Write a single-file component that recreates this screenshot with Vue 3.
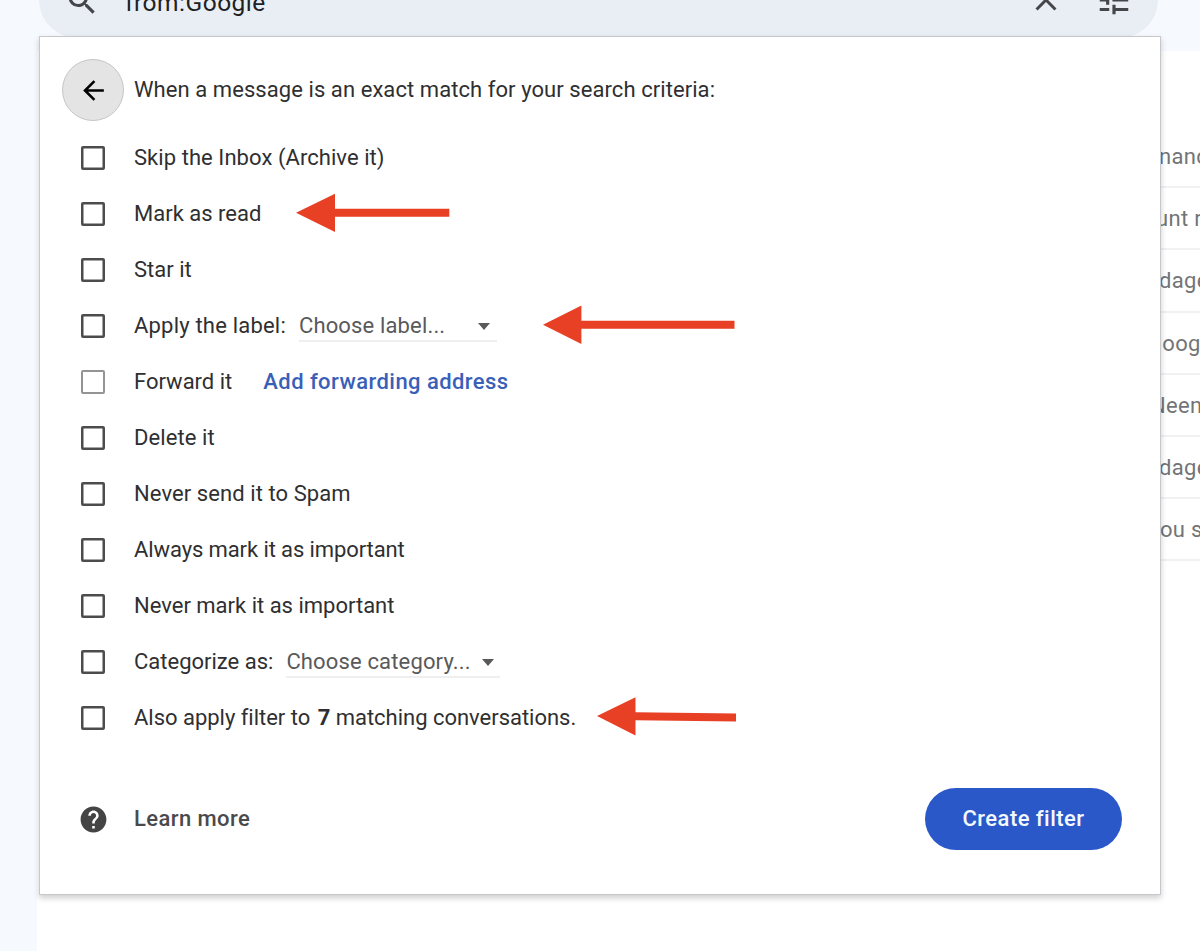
<template>
  <div class="page">
    <header class="search-bar">
      <svg class="icon-search" width="36" height="36" viewBox="0 0 24 24">
        <path d="M15.5 14h-.79l-.28-.27A6.47 6.47 0 0 0 16 9.5 6.5 6.5 0 1 0 9.5 16c1.61 0 3.09-.59 4.23-1.57l.27.28v.79l5 4.99L20.49 19l-4.99-5zm-6 0C7.01 14 5 11.99 5 9.5S7.01 5 9.5 5 14 7.01 14 9.5 11.99 14 9.5 14z" />
      </svg>
      <span class="query">from:Google</span>
      <svg class="icon-close" width="36" height="36" viewBox="0 0 24 24">
        <path d="M19 6.41L17.59 5 12 10.59 6.41 5 5 6.41 10.59 12 5 17.59 6.41 19 12 13.41 17.59 19 19 17.59 13.41 12z" />
      </svg>
      <svg class="icon-tune" width="38" height="38" viewBox="0 0 24 24">
        <path d="M3 17v2h6v-2H3zM3 5v2h10V5H3zm10 16v-2h8v-2h-8v-2h-2v6h2zM7 9v2H3v2h4v2h2V9H7zm14 4v-2H11v2h10zm-6-4h2V7h4V5h-4V3h-2v6z" />
      </svg>
    </header>

    <main class="mail-list">
      <div v-for="(mail, index) in mails" :key="index" class="mail">
        <span :style="{ marginLeft: mail.shift + 'px' }">{{ mail.text }}</span>
      </div>
    </main>

    <section class="dialog">
      <div class="heading">
        <button class="back" aria-label="Back">
          <svg width="31" height="31" viewBox="0 0 24 24">
            <path d="M20 11H7.83l5.59-5.59L12 4l-8 8 8 8 1.41-1.41L7.83 13H20v-2z" />
          </svg>
        </button>
        <span class="title">When a message is an exact match for your search criteria:</span>
      </div>

      <label v-for="option in options" :key="option.name" class="option" :class="option.name">
        <input type="checkbox" v-model="selected" :value="option.name" :disabled="option.disabled">
        <span v-if="option.count" class="text">{{ option.text }} <b>{{ option.count }}</b> {{ option.after }}</span>
        <span v-else class="text">{{ option.text }}</span>
        <span v-if="option.select" class="select">
          <span class="choice">{{ option.select }}</span>
          <i class="caret"></i>
        </span>
        <a v-if="option.link" class="link">{{ option.link }}</a>
      </label>

      <footer class="footer">
        <svg class="icon-help" width="31" height="31" viewBox="0 0 24 24">
          <path d="M12 2C6.48 2 2 6.48 2 12s4.48 10 10 10 10-4.48 10-10S17.52 2 12 2zm1 17h-2v-2h2v2zm2.07-7.75l-.9.92C13.45 12.9 13 13.5 13 15h-2v-.5c0-1.1.45-2.1 1.17-2.83l1.24-1.26c.37-.36.59-.86.59-1.41 0-1.1-.9-2-2-2s-2 .9-2 2H8c0-2.21 1.79-4 4-4s4 1.79 4 4c0 .88-.36 1.68-.93 2.25z" />
        </svg>
        <span class="learn">Learn more</span>
        <button class="create">Create filter</button>
      </footer>
    </section>

    <!-- red pointers drawn over the dialog -->
    <svg class="pointers" width="1200" height="951" viewBox="0 0 1200 951">
      <path d="M296 212.8L335 193.7V208.8H449.3V216.8H335V232Z" />
      <path d="M543 324.8L581.4 305.6V320.8H734.5V328.8H581.4V344Z" />
      <path d="M597 716L635.5 697.2V712.3L736 713.6V721.4L635.5 720.2V735.4Z" />
    </svg>
  </div>
</template>

<script setup>
import { ref } from 'vue';

// shift: how far each snippet slides under the dialog edge
const mails = [
  { text: 'nance', shift: 0 },
  { text: 'unt re', shift: -3 },
  { text: 'dagen', shift: 0 },
  { text: 'Google', shift: -12 },
  { text: 'Neem', shift: -9 },
  { text: 'dagen', shift: 0 },
  { text: 'ou si', shift: 1 },
];

const options = [
  { name: 'skip', text: 'Skip the Inbox (Archive it)' },
  { name: 'read', text: 'Mark as read' },
  { name: 'star', text: 'Star it' },
  { name: 'label', text: 'Apply the label:', select: 'Choose label...' },
  { name: 'forward', text: 'Forward it', link: 'Add forwarding address', disabled: true },
  { name: 'delete', text: 'Delete it' },
  { name: 'spam', text: 'Never send it to Spam' },
  { name: 'important', text: 'Always mark it as important' },
  { name: 'unimportant', text: 'Never mark it as important' },
  { name: 'category', text: 'Categorize as:', select: 'Choose category...' },
  { name: 'apply', text: 'Also apply filter to', count: 7, after: 'matching conversations.' },
];
const selected = ref([]);
</script>

<style>
body {
  margin: 0;
}
</style>

<style scoped>
.page {
  position: relative;
  width: 1200px;
  height: 951px;
  overflow: hidden;
  background: #f6fafe;
  color: #2f2f31;
  font-family: Roboto, "Liberation Sans", sans-serif;
  font-size: 22px;
  display: flex;
  flex-direction: column;
}

.search-bar {
  box-sizing: border-box;
  flex: none;
  display: flex;
  align-items: center;
  width: 1119px;
  height: 76px;
  margin: -38px 0 0 39px;
  padding: 4px 25px 0 25px;
  border-radius: 38px;
  background: #e9eef5;
  fill: #444649;
}

.icon-search {
  margin-bottom: 2px;
}

.query {
  flex: 1;
  margin-left: 25px;
  font-size: 24.5px;
  letter-spacing: .5px;
  color: #202124;
}

.icon-close {
  margin-bottom: 4px;
}

.icon-tune {
  margin: 0 0 5px 31px;
}

.mail-list {
  flex: 1;
  margin: 13px 0 0 37px;
  padding: 75px 0 0 1100px;
  background: #fff;
}

.mail {
  box-sizing: border-box;
  height: 62.2px;
  padding-left: 22px;
  border-bottom: 2px solid #f0f1f2;
  line-height: 62px;
  letter-spacing: .3px;
  white-space: nowrap;
  color: #727476;
}

.dialog {
  position: absolute;
  left: 39px;
  top: 36px;
  box-sizing: border-box;
  width: 1122px;
  height: 859px;
  padding: 22px 38px 0 22px;
  border: 1.5px solid #c6c8cb;
  background: #fff;
  box-shadow: 0 3px 6px rgba(0, 0, 0, .2);
}

.heading {
  display: flex;
  align-items: center;
  height: 62px;
  margin-bottom: 9px;
}

.back {
  box-sizing: border-box;
  display: flex;
  align-items: center;
  justify-content: center;
  width: 62px;
  height: 62px;
  margin-right: 10px;
  padding: 0;
  border: 1px solid #c6c6c6;
  border-radius: 50%;
  background: #e4e4e4;
}

.option {
  display: flex;
  align-items: center;
  height: 56px;
  padding-left: 19px;
}

.option input {
  appearance: none;
  box-sizing: border-box;
  width: 24px;
  height: 24px;
  margin: 0 29px 0 0;
  border: 2px solid #4c4c4e;
  border-radius: 2px;
  box-shadow: inset 0 0 0 .5px #4c4c4e;
}

.option input:disabled {
  border-color: #949496;
  box-shadow: none;
}

.text,
.title {
  padding-bottom: 1px;
  white-space: nowrap;
}

.title {
  letter-spacing: .07px;
}

.skip .text {
  letter-spacing: .06px;
}

.label .text {
  letter-spacing: .2px;
}

.delete .text,
.spam .text {
  letter-spacing: .08px;
}

.important .text {
  letter-spacing: -.1px;
}

.text b {
  margin-left: 2px;
}

.apply .text {
  letter-spacing: -.02px;
}

.select {
  box-sizing: border-box;
  display: flex;
  align-items: center;
  justify-content: space-between;
  width: 198px;
  height: 31px;
  margin-left: 13px;
  padding-right: 7px;
  border-bottom: 2px solid #efefef;
  letter-spacing: .15px;
  color: #59595b;
}

.category .select {
  width: 214px;
  padding-right: 6px;
}

.caret {
  margin-top: 2px;
  border: 6px solid transparent;
  border-top: 7px solid #59595b;
  border-bottom: 0;
}

.link {
  margin-left: 31px;
  padding-bottom: 1px;
  font-weight: 500;
  letter-spacing: .44px;
  color: #3a5fb8;
}

.footer {
  display: flex;
  align-items: center;
  height: 62px;
  margin-top: 42px;
  padding-left: 16px;
}

.icon-help {
  fill: #444;
}

.learn {
  flex: 1;
  margin-left: 25px;
  padding-bottom: 1px;
  font-weight: 500;
  letter-spacing: .42px;
  color: #4a4a4c;
}

.create {
  width: 197px;
  height: 62px;
  padding: 0 0 1px;
  border: 0;
  border-radius: 31px;
  background: #2a58c9;
  color: #f4f8ff;
  font: 500 22px Roboto, "Liberation Sans", sans-serif;
  letter-spacing: .46px;
}

.pointers {
  position: absolute;
  left: 0;
  top: 0;
  fill: #e84025;
  pointer-events: none;
}
</style>
